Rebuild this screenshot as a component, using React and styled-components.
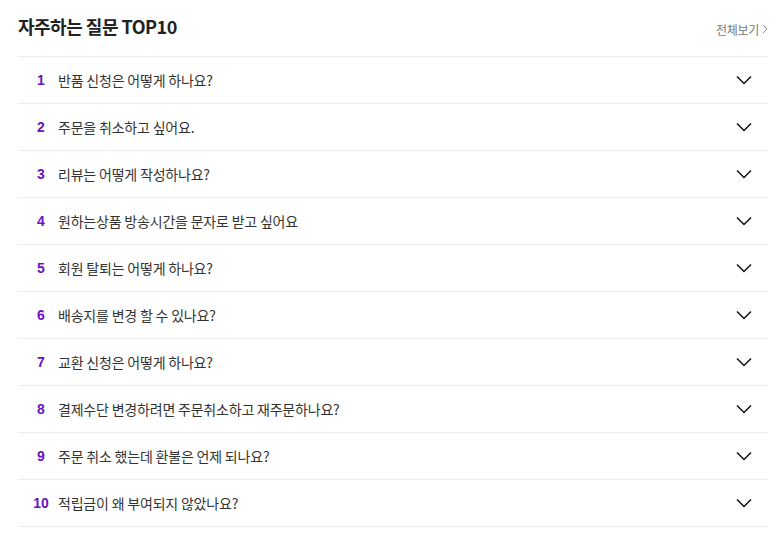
import React from "react";
import styled, { createGlobalStyle } from "styled-components";

const Global = createGlobalStyle`
  html, body { margin: 0; padding: 0; background: #fff; }
  body { font-family: "Noto Sans CJK KR", "Noto Sans", sans-serif; color: #333; }
  * { box-sizing: border-box; }
`;

const Wrap = styled.div`
  width: 780px;
  padding: 0 12px 0 18px;
`;

const Header = styled.div`
  height: 57px;
  display: flex;
  align-items: center;
  justify-content: space-between;
  border-bottom: 1px solid #eeeeee;
`;

const Title = styled.h2`
  margin: 0;
  font-size: 18px;
  font-weight: 700;
  color: #222;
  letter-spacing: -0.5px;
  padding-bottom: 4px;
`;

const More = styled.a`
  display: flex;
  align-items: center;
  gap: 3px;
  font-size: 12px;
  color: #777;
  text-decoration: none;
  margin-top: 2px;
  letter-spacing: -0.3px;
`;

const List = styled.ul`
  list-style: none;
  margin: 0;
  padding: 0;
`;

const Row = styled.li`
  height: 47px;
  display: flex;
  align-items: center;
  border-bottom: 1px solid #eeeeee;
  padding-right: 16px;
`;

const Num = styled.span`
  width: 30px;
  margin-left: 8px;
  text-align: center;
  font-family: "Liberation Sans", Arial, sans-serif;
  font-weight: 700;
  font-size: 14px;
  color: #6a12c0;
`;

const Question = styled.span`
  flex: 1;
  margin-left: 2px;
  font-size: 14px;
  color: #333;
  letter-spacing: -0.2px;
`;

const Chevron = () => (
  <svg width="16" height="10" viewBox="0 0 16 10" fill="none">
    <path d="M1 1.5 L8 8.5 L15 1.5" stroke="#111" strokeWidth="1.5" />
  </svg>
);

const SmallArrow = () => (
  <svg width="6" height="10" viewBox="0 0 6 10" fill="none">
    <path d="M1 1 L5 5 L1 9" stroke="#888" strokeWidth="1" />
  </svg>
);

const items = [
  "반품 신청은 어떻게 하나요?",
  "주문을 취소하고 싶어요.",
  "리뷰는 어떻게 작성하나요?",
  "원하는상품 방송시간을 문자로 받고 싶어요",
  "회원 탈퇴는 어떻게 하나요?",
  "배송지를 변경 할 수 있나요?",
  "교환 신청은 어떻게 하나요?",
  "결제수단 변경하려면 주문취소하고 재주문하나요?",
  "주문 취소 했는데 환불은 언제 되나요?",
  "적립금이 왜 부여되지 않았나요?",
];

export default function App() {
  return (
    <>
      <Global />
      <Wrap>
        <Header>
          <Title>자주하는 질문 TOP10</Title>
          <More href="#">
            전체보기 <SmallArrow />
          </More>
        </Header>
        <List>
          {items.map((q, i) => (
            <Row key={i}>
              <Num>{i + 1}</Num>
              <Question>{q}</Question>
              <Chevron />
            </Row>
          ))}
        </List>
      </Wrap>
    </>
  );
}
